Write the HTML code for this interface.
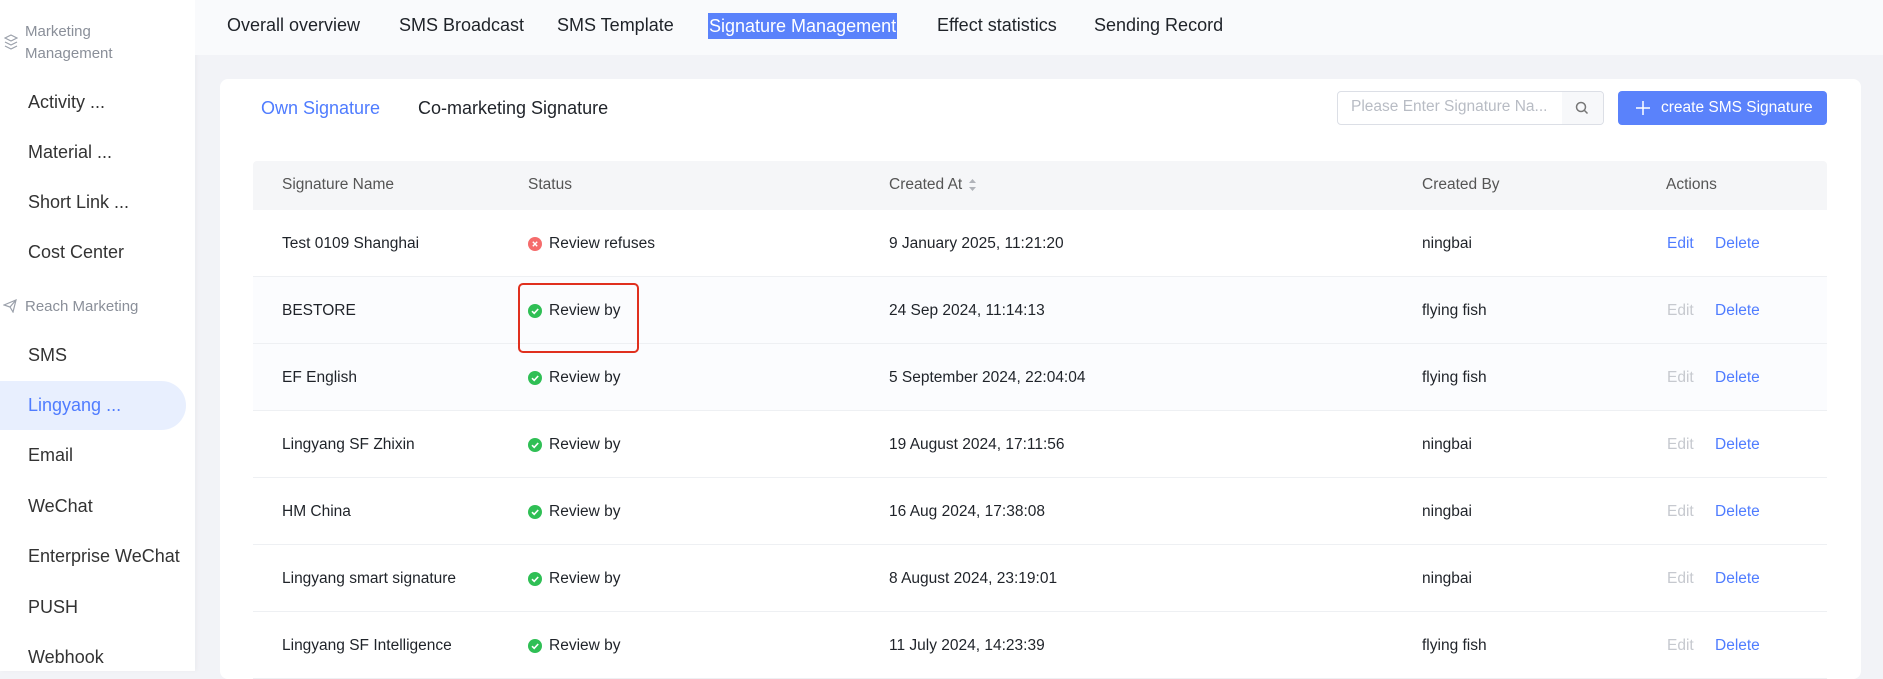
<!DOCTYPE html>
<html><head><meta charset="utf-8"><style>
*{margin:0;padding:0;box-sizing:border-box}
body{width:1883px;height:671px;overflow:hidden;background:#f2f3f7;font-family:"Liberation Sans",sans-serif;position:relative;color:#1f2329}
.a{position:absolute;white-space:nowrap}
#side{position:absolute;left:0;top:0;width:195px;height:671px;background:#fff;box-shadow:2px 0 4px rgba(0,0,0,.03)}
#top{position:absolute;left:195px;top:0;right:0;height:55px;background:#f9fafc}
.nav{font-size:18px;color:#1f2329;top:15px}
.si{font-size:18px;color:#333;left:28px}
.grp{font-size:15px;color:#8a8f99;left:25px}
#card{position:absolute;left:220px;top:79px;width:1641px;height:600px;background:#fff;border-radius:8px}
.row{position:absolute;left:253px;width:1574px;height:67px;border-bottom:1px solid #eef0f3}
.c{position:absolute;top:0;line-height:67px;font-size:15.5px;color:#1f2329;white-space:nowrap}
.st{left:275px;padding-left:21px}
.ic{position:absolute;left:0;top:27px;width:14px;height:14px;border-radius:50%}
.ok{background:#2fbf55}.no{background:#f56c6c}
.ic svg{position:absolute;left:0;top:0}
.ed{left:1414px;color:#4f7cff}.dis{color:#c6c9cf}
.de{left:1462px;color:#4f7cff}
</style></head><body>
<div id="side">
<svg class="a" style="left:4px;top:34px" width="14" height="16" viewBox="0 0 14 16"><path d="M7 1L1 4l6 3 6-3zM1 8l6 3 6-3M1 12l6 3 6-3" fill="none" stroke="#9aa0aa" stroke-width="1.2"/></svg>
<div class="a grp" style="top:23px">Marketing</div>
<div class="a grp" style="top:45px">Management</div>
<div class="a si" style="top:92px">Activity ...</div>
<div class="a si" style="top:142px">Material ...</div>
<div class="a si" style="top:192px">Short Link ...</div>
<div class="a si" style="top:242px">Cost Center</div>
<svg class="a" style="left:3px;top:299px" width="14" height="14" viewBox="0 0 14 14"><path d="M1 6L13 1 10 13 7 8zM7 8l6-7" fill="none" stroke="#9aa0aa" stroke-width="1.2"/></svg>
<div class="a grp" style="top:298px">Reach Marketing</div>
<div class="a si" style="top:345px">SMS</div>
<div class="a" style="left:0;top:381px;width:186px;height:49px;background:#e8effe;border-radius:0 25px 25px 0"></div>
<div class="a si" style="top:395px;color:#4f7cff">Lingyang ...</div>
<div class="a si" style="top:445px">Email</div>
<div class="a si" style="top:496px">WeChat</div>
<div class="a si" style="top:546px">Enterprise WeChat</div>
<div class="a si" style="top:597px">PUSH</div>
<div class="a si" style="top:647px">Webhook</div>
</div>
<div id="top"></div>
<div class="a nav" style="left:227px">Overall overview</div>
<div class="a nav" style="left:399px">SMS Broadcast</div>
<div class="a nav" style="left:557px">SMS Template</div>
<div class="a nav" style="left:708px;top:13px;background:#5a82fb;color:#fff;padding:2px 1px;line-height:22px">Signature Management</div>
<div class="a nav" style="left:937px">Effect statistics</div>
<div class="a nav" style="left:1094px">Sending Record</div>
<div id="card"></div>
<div class="a" style="left:261px;top:98px;font-size:18px;color:#4f7cff">Own Signature</div>
<div class="a" style="left:418px;top:98px;font-size:18px;color:#1f2329">Co-marketing Signature</div>
<div class="a" style="left:1337px;top:91px;width:267px;height:34px;border:1px solid #dcdfe6;border-radius:4px;background:#fff"></div>
<div class="a" style="left:1562px;top:92px;width:41px;height:32px;background:#f7f8fa;border-radius:0 4px 4px 0"></div>
<div class="a" style="left:1351px;top:98px;font-size:15.5px;color:#b8bcc4">Please Enter Signature Na...</div>
<svg class="a" style="left:1575px;top:101px" width="14" height="14" viewBox="0 0 14 14"><circle cx="6" cy="6" r="4.5" fill="none" stroke="#777" stroke-width="1.5"/><path d="M9.5 9.5L12.5 12.5" stroke="#777" stroke-width="1.5"/></svg>
<div class="a" style="left:1618px;top:91px;width:209px;height:34px;background:#5a82fb;border-radius:4px"></div>
<svg class="a" style="left:1636px;top:101px" width="14" height="14" viewBox="0 0 14 14"><path d="M7 0V14M0 7H14" stroke="#fff" stroke-width="1.5"/></svg>
<div class="a" style="left:1661px;top:99px;font-size:15.5px;color:#fff">create SMS Signature</div>
<div class="a" style="left:253px;top:161px;width:1574px;height:49px;background:#f5f6f8;border-radius:4px 4px 0 0"></div>
<div class="a" style="left:282px;top:176px;font-size:15.5px;color:#555">Signature Name</div>
<div class="a" style="left:528px;top:176px;font-size:15.5px;color:#555">Status</div>
<div class="a" style="left:889px;top:176px;font-size:15.5px;color:#555">Created At</div>
<svg class="a" style="left:968px;top:178px" width="9" height="14" viewBox="0 0 9 14"><path d="M4.5 1L8 5H1zM4.5 13L8 9H1z" fill="#b0b3b9"/></svg>
<div class="a" style="left:1422px;top:176px;font-size:15.5px;color:#555">Created By</div>
<div class="a" style="left:1666px;top:176px;font-size:15.5px;color:#555">Actions</div>

<div class="row" style="top:210px"><div class="c" style="left:29px">Test 0109 Shanghai</div><div class="c st"><span class="ic no"><svg width="14" height="14" viewBox="0 0 14 14"><path d="M4.8 4.8L9.2 9.2M9.2 4.8L4.8 9.2" stroke="#fff" stroke-width="1.4"/></svg></span>Review refuses</div><div class="c" style="left:636px">9 January 2025, 11:21:20</div><div class="c" style="left:1169px">ningbai</div><div class="c ed">Edit</div><div class="c de">Delete</div></div>
<div class="row" style="top:277px;background:#fbfcfe"><div class="c" style="left:29px">BESTORE</div><div class="c st"><span class="ic ok"><svg width="14" height="14" viewBox="0 0 14 14"><path d="M4 7.2L6.2 9.3 10.2 5" fill="none" stroke="#fff" stroke-width="1.6"/></svg></span>Review by</div><div class="c" style="left:636px">24 Sep 2024, 11:14:13</div><div class="c" style="left:1169px">flying fish</div><div class="c ed dis">Edit</div><div class="c de">Delete</div></div>
<div class="row" style="top:344px;background:#fbfcfe"><div class="c" style="left:29px">EF English</div><div class="c st"><span class="ic ok"><svg width="14" height="14" viewBox="0 0 14 14"><path d="M4 7.2L6.2 9.3 10.2 5" fill="none" stroke="#fff" stroke-width="1.6"/></svg></span>Review by</div><div class="c" style="left:636px">5 September 2024, 22:04:04</div><div class="c" style="left:1169px">flying fish</div><div class="c ed dis">Edit</div><div class="c de">Delete</div></div>
<div class="row" style="top:411px"><div class="c" style="left:29px">Lingyang SF Zhixin</div><div class="c st"><span class="ic ok"><svg width="14" height="14" viewBox="0 0 14 14"><path d="M4 7.2L6.2 9.3 10.2 5" fill="none" stroke="#fff" stroke-width="1.6"/></svg></span>Review by</div><div class="c" style="left:636px">19 August 2024, 17:11:56</div><div class="c" style="left:1169px">ningbai</div><div class="c ed dis">Edit</div><div class="c de">Delete</div></div>
<div class="row" style="top:478px"><div class="c" style="left:29px">HM China</div><div class="c st"><span class="ic ok"><svg width="14" height="14" viewBox="0 0 14 14"><path d="M4 7.2L6.2 9.3 10.2 5" fill="none" stroke="#fff" stroke-width="1.6"/></svg></span>Review by</div><div class="c" style="left:636px">16 Aug 2024, 17:38:08</div><div class="c" style="left:1169px">ningbai</div><div class="c ed dis">Edit</div><div class="c de">Delete</div></div>
<div class="row" style="top:545px"><div class="c" style="left:29px">Lingyang smart signature</div><div class="c st"><span class="ic ok"><svg width="14" height="14" viewBox="0 0 14 14"><path d="M4 7.2L6.2 9.3 10.2 5" fill="none" stroke="#fff" stroke-width="1.6"/></svg></span>Review by</div><div class="c" style="left:636px">8 August 2024, 23:19:01</div><div class="c" style="left:1169px">ningbai</div><div class="c ed dis">Edit</div><div class="c de">Delete</div></div>
<div class="row" style="top:612px"><div class="c" style="left:29px">Lingyang SF Intelligence</div><div class="c st"><span class="ic ok"><svg width="14" height="14" viewBox="0 0 14 14"><path d="M4 7.2L6.2 9.3 10.2 5" fill="none" stroke="#fff" stroke-width="1.6"/></svg></span>Review by</div><div class="c" style="left:636px">11 July 2024, 14:23:39</div><div class="c" style="left:1169px">flying fish</div><div class="c ed dis">Edit</div><div class="c de">Delete</div></div>

<div class="a" style="left:518px;top:283px;width:121px;height:70px;border:2.5px solid #e0301e;border-radius:5px"></div>
</body></html>
